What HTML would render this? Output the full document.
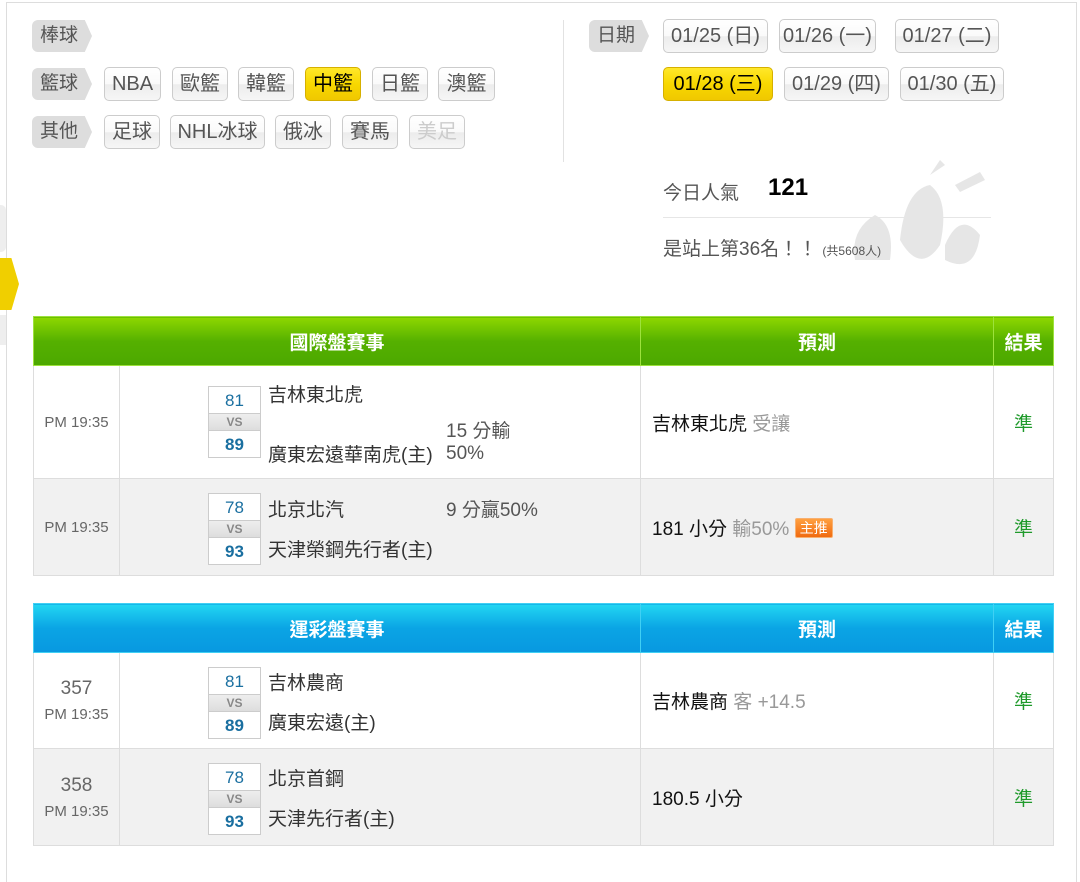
<!DOCTYPE html>
<html><head><meta charset="utf-8"><style>
*{margin:0;padding:0;box-sizing:border-box}
body{width:1080px;height:867px;background:#fff;font-family:"Liberation Sans","Noto Sans CJK TC",sans-serif;position:relative;overflow:hidden;color:#333}
.a{position:absolute}
.lbl{position:absolute;height:32px;width:60px;background:#ddd;border-radius:6px 0 0 6px;color:#555;font-size:19px;line-height:32px;padding-left:8px;clip-path:polygon(0 0,88% 0,100% 50%,88% 100%,0 100%)}
.btn{position:absolute;height:34px;border:1px solid #ccc;border-radius:5px;background:linear-gradient(#fff,#fafafa 50%,#ececec 52%,#f6f6f6);color:#555;font-size:20px;line-height:32px;text-align:center;white-space:nowrap}
.on{background:linear-gradient(#ffe82a,#f8d800 50%,#f0c800);border-color:#d6b000;color:#000}
.dis{color:#ccc}
table{position:absolute;left:33px;width:1020px;border-collapse:collapse;table-layout:fixed}
td,th{border:1px solid #ddd}
th{color:#fff;font-size:19px;height:49px;font-weight:bold}
.g th{background:linear-gradient(#8ed700,#55b000 50%,#4ca800);border-color:#9de23c}
.b th{background:linear-gradient(#22d6f2,#0aa4e4 50%,#0898e0);border-color:#40d0f4}
.t{font-size:15px;color:#666;text-align:center}
.t b{display:block;font-weight:normal;font-size:19px;margin-bottom:6px}
.grey td{background:#f1f1f1}
.m{position:relative}
.sb{position:absolute;left:88px;width:53px;border:1px solid #ccc;background:#fff;text-align:center;color:#1a6fa0;font-size:17px}
.sb .s1{height:27px;line-height:27px;border-bottom:1px solid #ccc}
.sb .vs{height:16px;line-height:16px;font-size:12px;color:#888;font-weight:bold;background:linear-gradient(#eee,#ddd)}
.sb .s2{height:27px;line-height:27px;border-top:1px solid #ccc;font-weight:bold}
.tn{position:absolute;left:148px;font-size:19px;color:#333}
.od{position:absolute;font-size:19px;color:#555}
.p{font-size:19px;color:#111;padding-left:11px}
.p span{color:#999}
.r{text-align:center;color:#1f9a2b;font-size:19px}
.p .tag{display:inline-block;background:linear-gradient(#ffa040,#f06a10);color:#fff;font-size:14px;line-height:18px;padding:0 4px;border-radius:2px;vertical-align:2px;border:1px solid #f8b070}
</style></head><body>
<div class="a" style="left:6px;top:2px;width:1071px;height:880px;border-left:1px solid #ddd;border-top:1px solid #ddd;border-right:1px solid #ddd"></div>
<div class="a" style="left:0;top:205px;width:6px;height:47px;background:#eee;border-radius:0 5px 5px 0"></div>
<div class="a" style="left:0;top:258px;width:19px;height:52px;background:#f0cf00;clip-path:polygon(0 0,60% 0,100% 50%,60% 100%,0 100%)"></div>
<div class="a" style="left:0;top:315px;width:6px;height:30px;background:#eee"></div>
<div class="lbl" style="left:32px;top:20px">棒球</div>
<div class="lbl" style="left:32px;top:68px">籃球</div>
<div class="lbl" style="left:32px;top:116px">其他</div>
<div class="btn" style="left:104px;top:67px;width:57px">NBA</div>
<div class="btn" style="left:172px;top:67px;width:56px">歐籃</div>
<div class="btn" style="left:238px;top:67px;width:56px">韓籃</div>
<div class="btn on" style="left:305px;top:67px;width:56px">中籃</div>
<div class="btn" style="left:372px;top:67px;width:56px">日籃</div>
<div class="btn" style="left:438px;top:67px;width:57px">澳籃</div>
<div class="btn" style="left:104px;top:115px;width:56px">足球</div>
<div class="btn" style="left:170px;top:115px;width:95px">NHL冰球</div>
<div class="btn" style="left:275px;top:115px;width:56px">俄冰</div>
<div class="btn" style="left:342px;top:115px;width:56px">賽馬</div>
<div class="btn dis" style="left:409px;top:115px;width:56px">美足</div>
<div class="a" style="left:563px;top:20px;width:1px;height:142px;background:#e2e2e2"></div>
<div class="lbl" style="left:589px;top:20px">日期</div>
<div class="btn" style="left:663px;top:19px;width:105px">01/25 (日)</div>
<div class="btn" style="left:779px;top:19px;width:97px">01/26 (一)</div>
<div class="btn" style="left:895px;top:19px;width:104px">01/27 (二)</div>
<div class="btn on" style="left:663px;top:67px;width:110px">01/28 (三)</div>
<div class="btn" style="left:784px;top:67px;width:105px">01/29 (四)</div>
<div class="btn" style="left:900px;top:67px;width:104px">01/30 (五)</div>
<svg class="a" style="left:845px;top:160px" width="140" height="115"><g fill="#e6e6e6"><path d="M10 100 Q5 70 30 55 Q50 65 45 100 Z"/><path d="M55 80 Q60 30 85 25 Q105 40 95 85 Q75 115 55 80Z"/><path d="M100 85 Q115 50 135 75 Q130 115 100 100Z"/><path d="M85 15 L95 0 L100 5 Z"/><path d="M110 25 L135 12 L140 20 L115 32Z"/></g></svg>
<div class="a" style="left:663px;top:178px;font-size:19px;color:#555">今日人氣</div>
<div class="a" style="left:768px;top:174px;font-size:24px;font-weight:bold;color:#000">121</div>
<div class="a" style="left:663px;top:217px;width:328px;height:1px;background:#e6e6e6"></div>
<div class="a" style="left:663px;top:234px;font-size:19px;color:#555">是站上第36名！！ <span style="font-size:12px">(共5608人)</span></div>

<table class="g" style="top:316px">
<colgroup><col style="width:86px"><col style="width:521px"><col style="width:353px"><col style="width:60px"></colgroup>
<tr><th colspan="2">國際盤賽事</th><th>預測</th><th>結果</th></tr>
<tr style="height:113px"><td class="t">PM 19:35</td><td class="m"><div class="sb" style="top:20px"><div class="s1">81</div><div class="vs">VS</div><div class="s2">89</div></div><div class="tn" style="top:14px">吉林東北虎</div><div class="tn" style="top:74px">廣東宏遠華南虎(主)</div><div class="od" style="left:326px;top:50px">15 分輸<br>50%</div></td><td class="p">吉林東北虎 <span>受讓</span></td><td class="r">準</td></tr>
<tr class="grey" style="height:97px"><td class="t">PM 19:35</td><td class="m"><div class="sb" style="top:14px"><div class="s1">78</div><div class="vs">VS</div><div class="s2">93</div></div><div class="tn" style="top:16px">北京北汽</div><div class="tn" style="top:56px">天津榮鋼先行者(主)</div><div class="od" style="left:326px;top:16px">9 分贏50%</div></td><td class="p">181 小分 <span>輸50%</span> <b class="tag" style="font-weight:normal">主推</b></td><td class="r">準</td></tr>
</table>

<table class="b" style="top:603px">
<colgroup><col style="width:86px"><col style="width:521px"><col style="width:353px"><col style="width:60px"></colgroup>
<tr><th colspan="2">運彩盤賽事</th><th>預測</th><th>結果</th></tr>
<tr style="height:96px"><td class="t"><b>357</b>PM 19:35</td><td class="m"><div class="sb" style="top:14px"><div class="s1">81</div><div class="vs">VS</div><div class="s2">89</div></div><div class="tn" style="top:15px">吉林農商</div><div class="tn" style="top:55px">廣東宏遠(主)</div></td><td class="p">吉林農商 <span>客 +14.5</span></td><td class="r">準</td></tr>
<tr class="grey" style="height:97px"><td class="t"><b>358</b>PM 19:35</td><td class="m"><div class="sb" style="top:14px"><div class="s1">78</div><div class="vs">VS</div><div class="s2">93</div></div><div class="tn" style="top:15px">北京首鋼</div><div class="tn" style="top:55px">天津先行者(主)</div></td><td class="p">180.5 小分</td><td class="r">準</td></tr>
</table>
</body></html>
